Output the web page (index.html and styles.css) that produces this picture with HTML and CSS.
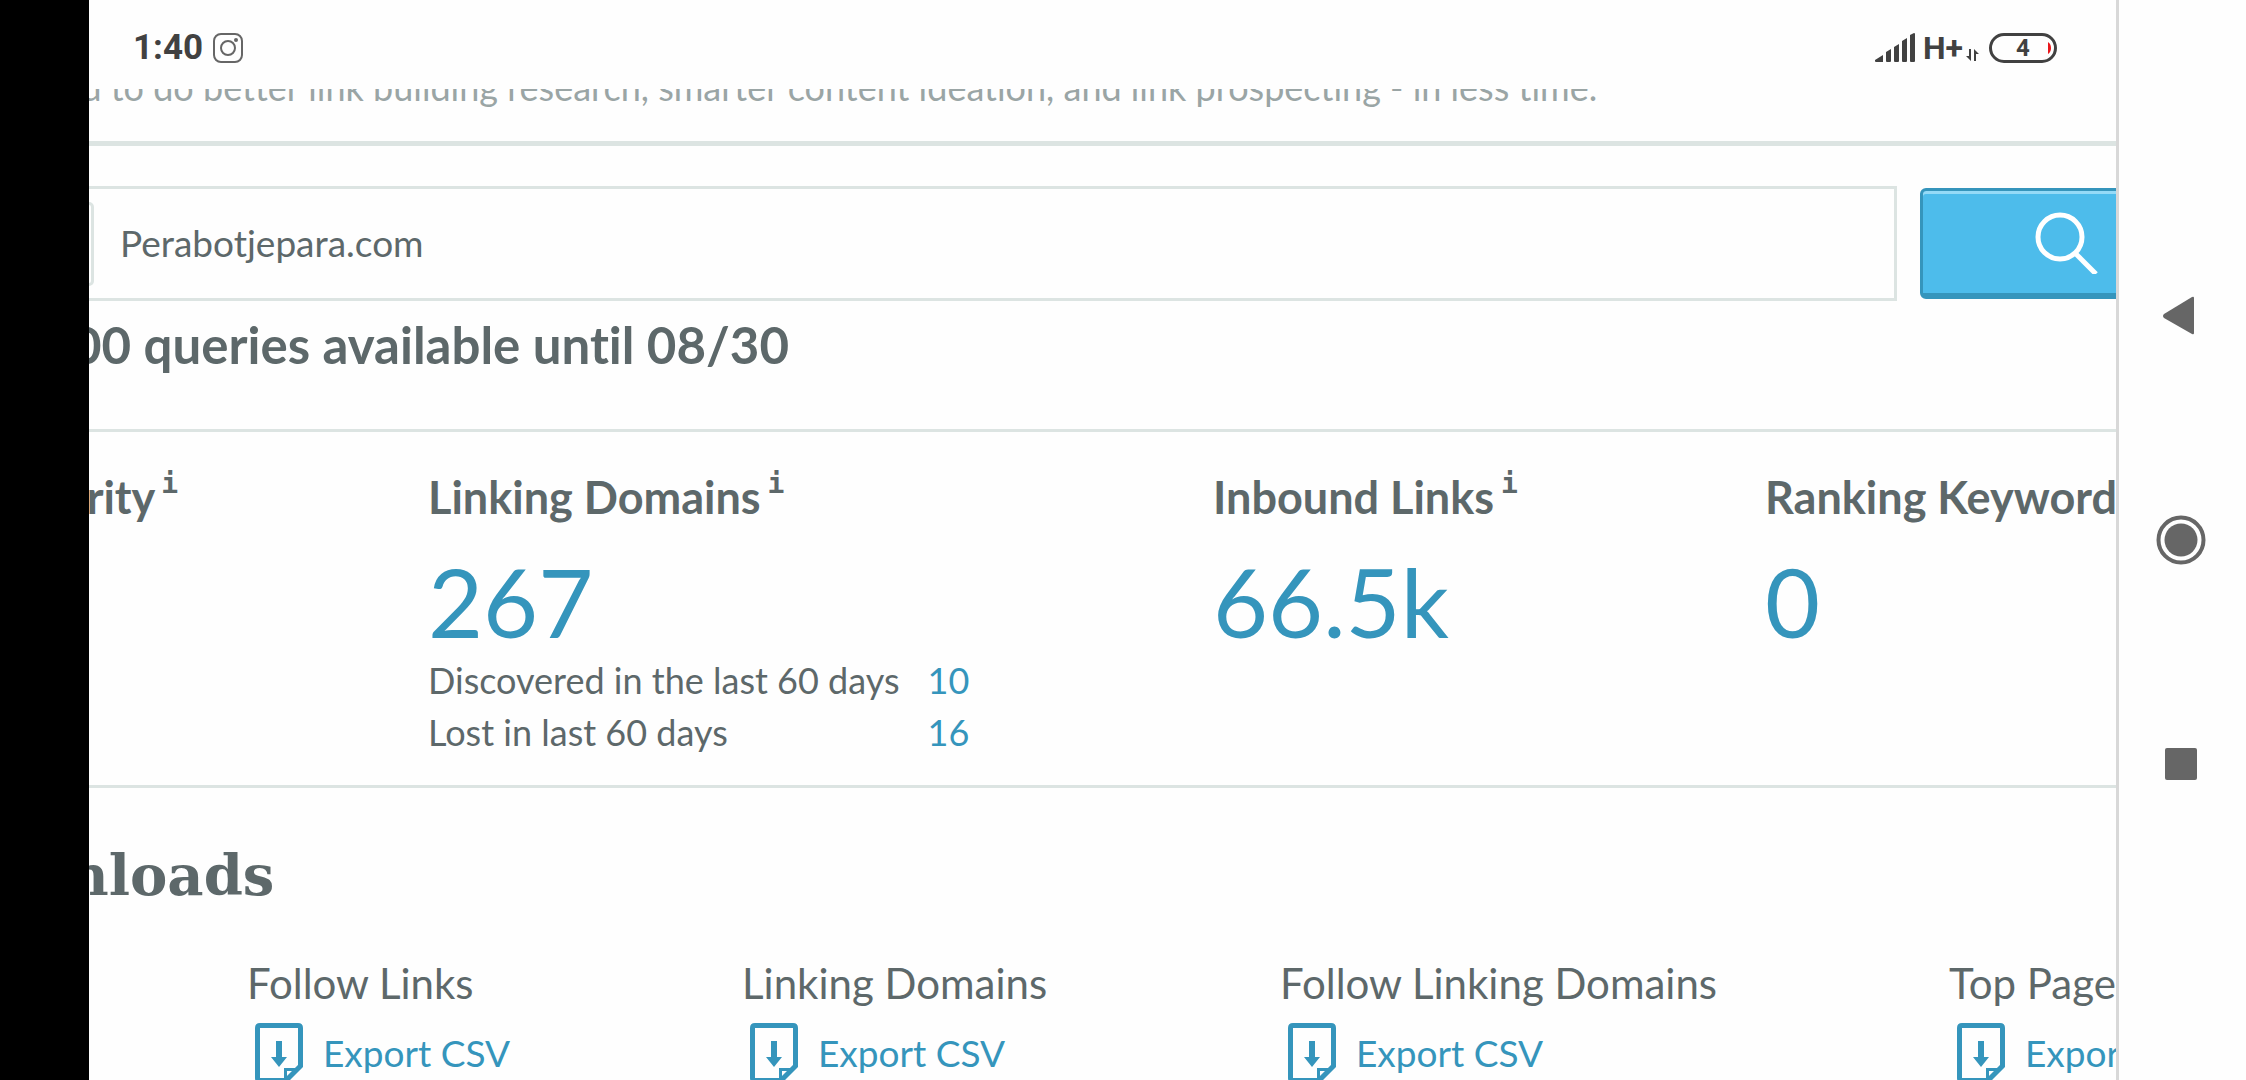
FILE: index.html
```html
<!DOCTYPE html>
<html lang="en">
  <head>
    <meta charset="UTF-8" />
    <meta name="viewport" content="width=device-width, initial-scale=1.0" />
    <title>Link Explorer</title>
    <link rel="stylesheet" href="styles.css">
  </head>
  <body>
    <div class="notch"></div>
    <div class="screen">
      <header class="status">
        <span class="time">1:40</span>
        <svg class="insta" viewBox="0 0 30 30" width="30" height="30">
          <rect x="1" y="1" width="28" height="28" rx="7" />
          <circle cx="15" cy="15" r="7" />
          <circle class="dot" cx="23" cy="7" r="2" />
        </svg>
        <div class="status-right">
          <svg class="signal" viewBox="0 0 40 30" width="40" height="30">
            <path d="M0 27 L8 22 V29 H1 Q0 29 0 28Z M11 19 L16 16 V28 Q16 29 15 29 H12 Q11 29 11 28Z M19 14 L24 11 V28 Q24 29 23 29 H20 Q19 29 19 28Z M27 8 L32 5 V28 Q32 29 31 29 H28 Q27 29 27 28Z M35 2 L39 0 Q40 0 40 1 V28 Q40 29 39 29 H36 Q35 29 35 28Z" />
          </svg>
          <span class="network">H+</span>
          <svg class="data" viewBox="0 0 13 12" width="13" height="12">
            <path d="M3 0 H5 V12 L0 7 H3Z M8 12 V0 L13 5 H10 V12Z" />
          </svg>
          <span class="battery">
            4
            <svg viewBox="0 0 3 12" width="3" height="12"><path d="M0 0 Q3 2 3 6 T0 12Z" /></svg>
          </span>
        </div>
      </header>

      <main>
        <p class="tagline">you to do better link building research, smarter content ideation, and link prospecting - in less time.</p>

        <form class="search">
          <div class="search-box">
            <span class="search-type"></span>
            <input type="text" value="Perabotjepara.com" aria-label="Site" />
          </div>
          <button type="button" aria-label="Search">
            <svg viewBox="0 0 64 64" width="64" height="64">
              <circle cx="25" cy="27" r="22" />
              <path d="M41 44 L61 64" />
            </svg>
          </button>
        </form>
        <h3 class="queries">00 queries available until 08/30</h3>

        <section class="metrics">
          <div class="metric metric-cut">
            <h4>Authority <sup>i</sup></h4>
          </div>
          <div class="metric">
            <h4>Linking Domains <sup>i</sup></h4>
            <a class="value" href="#">267</a>
            <table>
              <tr>
                <th>Discovered in the last 60 days</th>
                <td><a href="#">10</a></td>
              </tr>
              <tr>
                <th>Lost in last 60 days</th>
                <td><a href="#">16</a></td>
              </tr>
            </table>
          </div>
          <div class="metric">
            <h4>Inbound Links <sup>i</sup></h4>
            <a class="value" href="#">66.5k</a>
          </div>
          <div class="metric">
            <h4>Ranking Keywords <sup>i</sup></h4>
            <a class="value" href="#">0</a>
          </div>
        </section>

        <section class="downloads">
          <h2>nloads</h2>
          <div class="exports">
            <div class="export">
              <div class="label">Follow Links</div>
              <a href="#">
                <svg viewBox="0 0 48 60" width="48" height="60">
                  <path class="page" d="M5 2.5 H43 Q45.500 2.500 45.500 5 V43 L31 57.500 H5 Q2.500 57.500 2.500 55 V5 Q2.500 2.500 5 2.500Z" />
                  <path class="fold" d="M30.500 58 V46.500 H43" />
                  <path class="arrow" d="M21 18 H27 V34 H32 L24 44 L16 34 H21Z" />
                </svg>
                <span>Export CSV</span>
              </a>
            </div>
            <div class="export">
              <div class="label">Linking Domains</div>
              <a href="#">
                <svg viewBox="0 0 48 60" width="48" height="60">
                  <path class="page" d="M5 2.5 H43 Q45.500 2.500 45.500 5 V43 L31 57.500 H5 Q2.500 57.500 2.500 55 V5 Q2.500 2.500 5 2.500Z" />
                  <path class="fold" d="M30.500 58 V46.500 H43" />
                  <path class="arrow" d="M21 18 H27 V34 H32 L24 44 L16 34 H21Z" />
                </svg>
                <span>Export CSV</span>
              </a>
            </div>
            <div class="export">
              <div class="label">Follow Linking Domains</div>
              <a href="#">
                <svg viewBox="0 0 48 60" width="48" height="60">
                  <path class="page" d="M5 2.5 H43 Q45.500 2.500 45.500 5 V43 L31 57.500 H5 Q2.500 57.500 2.500 55 V5 Q2.500 2.500 5 2.500Z" />
                  <path class="fold" d="M30.500 58 V46.500 H43" />
                  <path class="arrow" d="M21 18 H27 V34 H32 L24 44 L16 34 H21Z" />
                </svg>
                <span>Export CSV</span>
              </a>
            </div>
            <div class="export">
              <div class="label">Top Pages</div>
              <a href="#">
                <svg viewBox="0 0 48 60" width="48" height="60">
                  <path class="page" d="M5 2.5 H43 Q45.500 2.500 45.500 5 V43 L31 57.500 H5 Q2.500 57.500 2.500 55 V5 Q2.500 2.500 5 2.500Z" />
                  <path class="fold" d="M30.500 58 V46.500 H43" />
                  <path class="arrow" d="M21 18 H27 V34 H32 L24 44 L16 34 H21Z" />
                </svg>
                <span>Export CSV</span>
              </a>
            </div>
          </div>
        </section>
      </main>
    </div>

    <nav class="navbar">
      <button type="button" aria-label="Back">
        <svg viewBox="0 0 60 60" width="60" height="60"><path d="M41 11 Q43 10 43 12 V47 Q43 49 41 48 L13 32 Q11 30 13 28Z" /></svg>
      </button>
      <button type="button" aria-label="Home">
        <svg viewBox="0 0 60 60" width="60" height="60">
          <circle class="ring" cx="30" cy="30" r="22.500" />
          <circle cx="30" cy="30" r="16.500" />
        </svg>
      </button>
      <button type="button" aria-label="Recent apps">
        <svg viewBox="0 0 60 60" width="60" height="60"><rect x="14" y="14" width="32" height="32" rx="2" /></svg>
      </button>
    </nav>
  </body>
</html>
```
FILE: styles.css
```css
* {
  margin: 0;
  padding: 0;
  box-sizing: border-box;
}

body {
  display: flex;
  height: 100vh;
  overflow: hidden;
  background: #fefefe;
  color: #5d686a;
  font-family: Lato, sans-serif;
  font-size: 36px;
  line-height: 52px;
  font-variant-ligatures: none;
}

a {
  color: #3595bc;
  text-decoration: none;
}

svg {
  display: block;
  flex-shrink: 0;
}

.notch {
  width: 89px;
  flex-shrink: 0;
  background: #000;
}

.screen {
  flex: 1;
  min-width: 0;
  display: flex;
  flex-direction: column;
}

/* status bar */
.status {
  display: flex;
  align-items: center;
  gap: 10px;
  height: 89px;
  flex-shrink: 0;
  padding: 6px 59px 0 44px;
  color: #414141;
  font-family: Roboto, sans-serif;
  font-weight: bold;
}

.time {
  font-size: 35px;
}

.insta {
  fill: none;
  stroke: #666;
  stroke-width: 2;
}

.insta .dot {
  fill: #666;
  stroke: none;
}

.status-right {
  display: flex;
  align-items: center;
  margin-left: auto;
}

.signal,
.data {
  fill: #414141;
}

.network {
  margin-left: 8px;
  font-size: 32px;
}

.data {
  margin: 14px 10px 0 3px;
}

.battery {
  display: flex;
  align-items: center;
  justify-content: space-between;
  width: 68px;
  height: 30px;
  padding: 0 3px 0 24px;
  border: 3px solid #414141;
  border-radius: 15px;
  font-size: 24px;
}

.battery svg {
  fill: #e8161b;
}

/* page, scrolled down and to the right */
main {
  flex: 1;
  min-height: 0;
  overflow: hidden;
}

.tagline {
  margin-top: -26px;
  margin-left: -46px;
  padding-bottom: 30px;
  border-bottom: 5px solid #dce4e2;
  color: #9aa5a5;
  line-height: 48px;
  white-space: nowrap;
}

.search {
  display: flex;
  align-items: center;
  gap: 23px;
  margin-top: 40px;
  margin-right: -97px;
}

.search-box {
  flex: 1;
  display: flex;
  align-items: center;
  height: 115px;
  border: 3px solid #dce4e2;
  border-left: 0;
}

.search-type {
  width: 5px;
  height: 84px;
  border: 3px solid #dce4e2;
  border-left: 0;
  border-radius: 0 6px 6px 0;
}

.search-box input {
  flex: 1;
  min-width: 0;
  height: 100%;
  padding: 0 26px 2px;
  border: 0;
  outline: 0;
  background: none;
  color: inherit;
  font: inherit;
  font-size: 37px;
}

.search button {
  display: flex;
  align-items: center;
  justify-content: center;
  width: 293px;
  height: 111px;
  border: 3px solid #3595bc;
  border-bottom-width: 6px;
  border-radius: 6px;
  background: #4dbceb;
  box-shadow: inset 0 3px #94daf7;
}

.search button svg {
  fill: none;
  stroke: #fff;
  stroke-width: 5;
}

.queries {
  margin: 14px 0 54px -17px;
  font-size: 51px;
  line-height: 60px;
  white-space: nowrap;
}

.metrics {
  display: grid;
  grid-template-columns: 339fr 785fr 552fr 351fr;
  padding: 37px 0 27px;
  border-top: 3px solid #dce4e2;
  border-bottom: 3px solid #dce4e2;
}

.metric {
  min-width: 0;
  white-space: nowrap;
}

.metric-cut {
  display: flex;
  justify-content: flex-end;
  padding-right: 250px;
}

.metric h4 {
  font-size: 45px;
  line-height: 56px;
}

.metric sup {
  margin-left: -4px;
  font-family: "DejaVu Sans Mono", monospace;
  font-size: 28px;
  line-height: 0;
  vertical-align: 21px;
}

.value {
  display: block;
  margin: 28px 0 5px;
  font-size: 95px;
  line-height: 96px;
}

.metric table {
  border-spacing: 0;
}

.metric th {
  padding-right: 28px;
  font-weight: normal;
  text-align: left;
}

.downloads {
  padding-top: 55px;
}

.downloads h2 {
  margin-left: -21px;
  font-family: "Roboto Slab", "DejaVu Serif", serif;
  font-size: 56px;
  line-height: 64px;
}

.exports {
  display: grid;
  grid-template-columns: 495fr 538fr 669fr 167fr;
  margin-top: 48px;
  padding-left: 158px;
}

.export {
  min-width: 0;
  white-space: nowrap;
}

.label {
  font-size: 42px;
  line-height: 56px;
}

.export a {
  display: flex;
  align-items: center;
  gap: 20px;
  margin: 12px 0 0 8px;
  font-size: 37px;
}

.page,
.fold {
  fill: none;
  stroke: #3595bc;
  stroke-width: 5;
}

.fold {
  stroke-width: 3;
}

.arrow {
  fill: #3595bc;
}

/* android buttons */
.navbar {
  display: flex;
  flex-direction: column;
  align-items: center;
  justify-content: center;
  gap: 164px;
  width: 130px;
  flex-shrink: 0;
  padding-right: 4px;
  border-left: 3px solid #d8d8d8;
}

.navbar button {
  border: 0;
  background: none;
}

.navbar svg {
  fill: #666;
}

.navbar .ring {
  fill: none;
  stroke: #666;
  stroke-width: 4;
}
```
